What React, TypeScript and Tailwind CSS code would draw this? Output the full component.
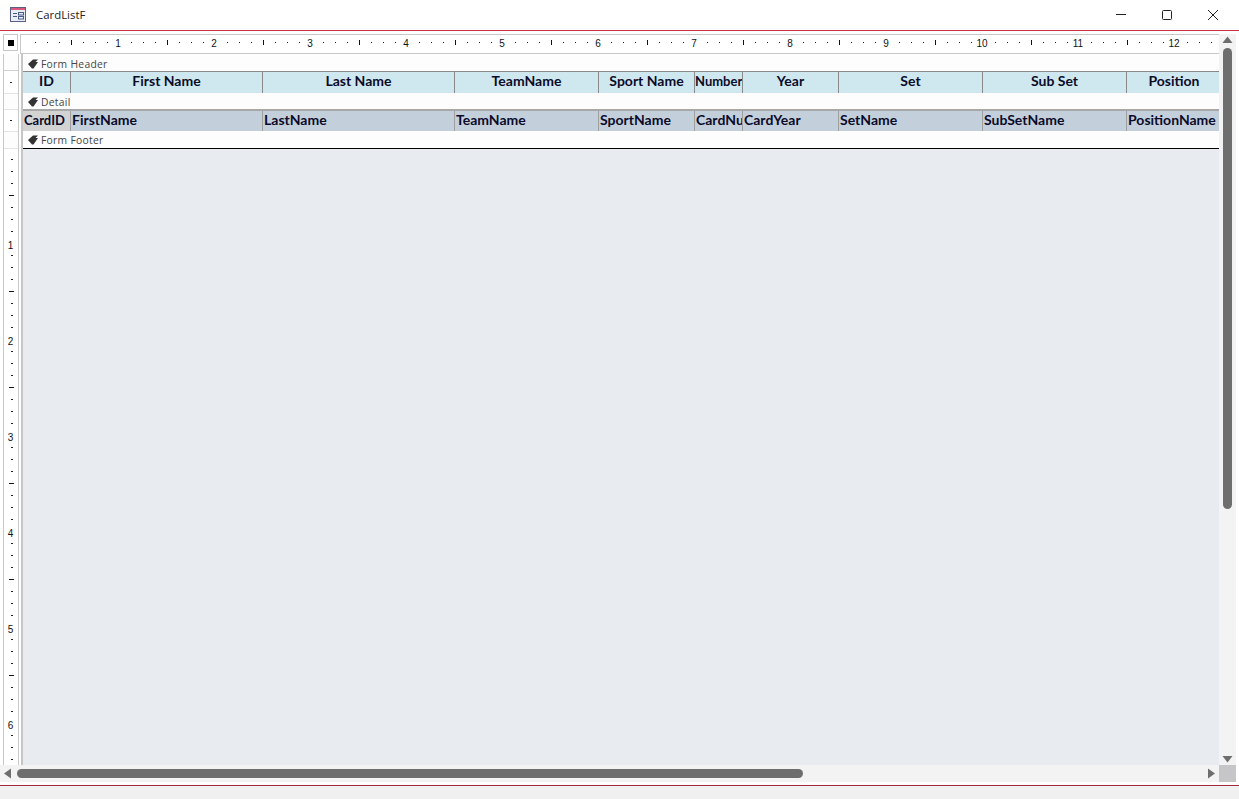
const headerCols = [
  { label: 'ID', w: 'w-[48px]', text: 'text-[14px]' },
  { label: 'First Name', w: 'w-[192px]', text: 'text-[14px]' },
  { label: 'Last Name', w: 'w-[192px]', text: 'text-[14px]' },
  { label: 'TeamName', w: 'w-[144px]', text: 'text-[14px]' },
  { label: 'Sport Name', w: 'w-[96px]', text: 'text-[14px]' },
  { label: 'Number', w: 'w-[48px]', text: 'text-[13px]' },
  { label: 'Year', w: 'w-[96px]', text: 'text-[14px]' },
  { label: 'Set', w: 'w-[144px]', text: 'text-[14px]' },
  { label: 'Sub Set', w: 'w-[144px]', text: 'text-[14px]' },
  { label: 'Position', w: 'w-[92px] pl-[2px]', text: 'text-[14px]' },
];

const detailCols = [
  { label: 'CardID', w: 'w-[48px]', bg: 'bg-[#d3d3d3]', text: 'text-[13px]' },
  { label: 'FirstName', w: 'w-[192px]', bg: 'bg-[#c3d0dc]', text: 'text-[14px]' },
  { label: 'LastName', w: 'w-[192px]', bg: 'bg-[#c3d0dc]', text: 'text-[14px]' },
  { label: 'TeamName', w: 'w-[144px]', bg: 'bg-[#c3d0dc]', text: 'text-[14px]' },
  { label: 'SportName', w: 'w-[96px]', bg: 'bg-[#c3d0dc]', text: 'text-[14px]' },
  { label: 'CardNumber', w: 'w-[48px]', bg: 'bg-[#c3d0dc]', text: 'text-[14px]' },
  { label: 'CardYear', w: 'w-[96px]', bg: 'bg-[#c3d0dc]', text: 'text-[14px]' },
  { label: 'SetName', w: 'w-[144px]', bg: 'bg-[#c3d0dc]', text: 'text-[14px]' },
  { label: 'SubSetName', w: 'w-[144px]', bg: 'bg-[#c3d0dc]', text: 'text-[14px]' },
  { label: 'PositionName', w: 'w-[92px]', bg: 'bg-[#c3d0dc]', text: 'text-[14px]' },
];

function FormIcon() {
  return (
    <svg width="17" height="16" viewBox="0 0 17 16" className="ml-[10px] shrink-0">
      <rect x="0.5" y="0.5" width="15" height="14" fill="#e8edf6" stroke="#5a5f86" />
      <rect x="1" y="1" width="14" height="2" fill="#d9577f" />
      <rect x="3" y="6" width="4" height="1" fill="#4a5a86" />
      <rect x="3" y="9" width="4" height="1" fill="#4a5a86" />
      <rect x="8.5" y="5.5" width="5" height="2.5" fill="none" stroke="#4a5a86" strokeWidth="1" />
      <rect x="8.5" y="9.5" width="5" height="2.5" fill="none" stroke="#4a5a86" strokeWidth="1" />
    </svg>
  );
}

function SectionArrow() {
  return (
    <svg width="10" height="10" viewBox="0 0 10 10" className="shrink-0">
      <path d="M0 5 L5 0.5 H10 L7.5 3 H10 L5.5 9.5 H4 Z" fill="#333" />
    </svg>
  );
}

function SectionBar({ label, border }: { label: string; border: string }) {
  return (
    <div className={`bg-[#fdfdfd] flex items-center pl-[5px] gap-[3px] ${border}`}>
      <SectionArrow />
      <span className="mt-[2px] text-[10.3px] tracking-[0.3px] text-[#444]">{label}</span>
    </div>
  );
}

function TopRuler() {
  const marks = Array.from({ length: 100 }, (_, i) => i + 1);
  return (
    <svg width="1198" height="16" className="block">
      {marks.map((k) => {
        const x = 2 + k * 12;
        if (k % 8 === 0) {
          return (
            <text key={k} x={x - 1} y="11" textAnchor="middle" fontSize="10" fontFamily="'Liberation Sans', sans-serif" fill="#111">
              {k / 8}
            </text>
          );
        }
        if (k % 4 === 0) return <rect key={k} x={x} y="4" width="1" height="5" fill="#111" />;
        return <rect key={k} x={x} y="6" width="1" height="1" fill="#222" />;
      })}
    </svg>
  );
}

function SideRuler() {
  const marks = Array.from({ length: 51 }, (_, i) => i + 1);
  return (
    <svg width="14" height="616" className="block">
      {marks.map((k) => {
        const y = k * 12 - 2;
        if (k % 8 === 0) {
          return (
            <text key={k} x="6.5" y={y + 6} textAnchor="middle" fontSize="10" fontFamily="'Liberation Sans', sans-serif" fill="#111">
              {k / 8}
            </text>
          );
        }
        if (k % 4 === 0) return <rect key={k} x="5" y={y} width="5" height="1" fill="#111" />;
        return <rect key={k} x="7" y={y} width="2" height="1" fill="#222" />;
      })}
    </svg>
  );
}

function TickSlot({ h }: { h: string }) {
  return (
    <div className={`${h} flex items-center justify-center`}>
      <div className="w-[2px] h-px bg-[#222]" />
    </div>
  );
}

export default function App() {
  return (
    <div className="w-[1239px] h-[799px] overflow-hidden bg-white flex flex-col font-['Open_Sans',sans-serif]">
      {/* Title bar */}
      <div className="h-[31px] shrink-0 flex items-center border-b border-[#c8324a]">
        <FormIcon />
        <span className="ml-[9px] text-[11.4px] text-[#222]">CardListF</span>
        <div className="ml-auto flex items-center gap-[36px] pr-[21px]">
          <svg width="10" height="10" viewBox="0 0 10 10"><rect x="0" y="4" width="10" height="1" fill="#222" /></svg>
          <svg width="10" height="10" viewBox="0 0 10 10"><rect x="0.5" y="0.5" width="9" height="9" rx="1" fill="none" stroke="#222" /></svg>
          <svg width="10" height="10" viewBox="0 0 10 10"><path d="M0 0 L10 10 M10 0 L0 10" stroke="#222" strokeWidth="1" /></svg>
        </div>
      </div>

      {/* Design view */}
      <div className="flex-1 min-h-0 flex">
        <div className="flex-1 min-w-0 flex flex-col">
          <div className="flex-1 min-h-0 flex flex-col pt-[3px]">
            {/* Ruler row */}
            <div className="h-[20px] shrink-0 flex">
              <div className="w-[16px] ml-[3px] h-[17px] border border-[#c8c8c8] flex items-center justify-center">
                <div className="w-[6px] h-[6px] bg-black" />
              </div>
              <div className="ml-[2px] flex-1 h-[20px] border-y border-l border-[#c8c8c8] flex items-center">
                <TopRuler />
              </div>
            </div>

            <div className="flex-1 min-h-0 flex">
              {/* Side ruler */}
              <div className="w-[16px] ml-[3px] border-x border-[#c8c8c8] flex flex-col overflow-hidden">
                <div className="h-[17px] shrink-0 bg-[#fdfdfd] border-b border-[#d0d0d0]" />
                <TickSlot h="h-[22px] shrink-0" />
                <div className="h-[17px] shrink-0 bg-[#fdfdfd] border-y border-[#e4e4e4]" />
                <TickSlot h="h-[21px] shrink-0" />
                <div className="h-[18px] shrink-0 bg-[#fdfdfd] border-y border-[#e4e4e4]" />
                <SideRuler />
              </div>

              {/* Form sections */}
              <div className="ml-[2px] flex-1 min-w-0 border-l-2 border-[#c6c6c6] flex flex-col bg-[#e8ebf0]">
                <SectionBar label="Form Header" border="h-[18px] pt-[3px] border-b border-[#8a8a8a]" />
                <div className="h-[21px] flex bg-[#cfe8ef]">
                  {headerCols.map((c, i) => (
                    <div
                      key={c.label}
                      className={`${c.w} ${c.text} shrink-0 overflow-hidden whitespace-nowrap text-center font-['Lato',sans-serif] font-bold leading-[18px] text-[#0b0b2a] ${i < headerCols.length - 1 ? 'border-r border-[#8a8a8a]' : ''}`}
                    >
                      {c.label}
                    </div>
                  ))}
                </div>
                <SectionBar label="Detail" border="h-[18px] pt-[2px] border-b-2 border-[#a8a8a8]" />
                <div className="h-[20px] flex">
                  {detailCols.map((c, i) => (
                    <div
                      key={c.label}
                      className={`${c.w} ${c.bg} ${c.text} shrink-0 overflow-hidden whitespace-nowrap pl-px font-['Lato',sans-serif] font-bold leading-[18px] text-[#0b0b2a] ${i < detailCols.length - 1 ? 'border-r border-[#a0a0a0]' : ''}`}
                    >
                      {c.label}
                    </div>
                  ))}
                </div>
                <SectionBar label="Form Footer" border="h-[18px] pt-[1px] border-b border-black" />
                <div className="flex-1" />
              </div>
            </div>
          </div>

          {/* Horizontal scrollbar */}
          <div className="h-[17px] shrink-0 bg-[#f3f3f3] flex items-center">
            <svg width="17" height="17" viewBox="0 0 17 17" className="shrink-0">
              <path d="M4 8.5 L11 3.5 V13.5 Z" fill="#6e6e6e" />
            </svg>
            <div className="w-[786px] h-[9px] rounded-full bg-[#6e6e6e]" />
            <svg width="17" height="17" viewBox="0 0 17 17" className="ml-auto shrink-0">
              <path d="M13 8.5 L6 3.5 V13.5 Z" fill="#6e6e6e" />
            </svg>
          </div>
        </div>

        {/* Vertical scrollbar */}
        <div className="w-[17px] mr-[3px] shrink-0 flex flex-col pt-[3px]">
          <div className="flex-1 min-h-0 bg-[#f3f3f3] flex flex-col items-center">
            <svg width="17" height="14" viewBox="0 0 17 14" className="shrink-0">
              <path d="M8.5 2.5 L13.5 9 H3.5 Z" fill="#6e6e6e" />
            </svg>
            <div className="w-[9px] h-[461px] rounded-full bg-[#6e6e6e]" />
            <svg width="17" height="14" viewBox="0 0 17 14" className="mt-auto shrink-0">
              <path d="M8.5 11.5 L13.5 5 H3.5 Z" fill="#6e6e6e" />
            </svg>
          </div>
          <div className="h-[17px] shrink-0 bg-[#c6c6c8]" />
        </div>
      </div>

      {/* Status bar */}
      <div className="h-[17px] shrink-0 pt-[3px]">
        <div className="h-full border-t border-[#a8263c] bg-[#f0f0f0]" />
      </div>
    </div>
  );
}
